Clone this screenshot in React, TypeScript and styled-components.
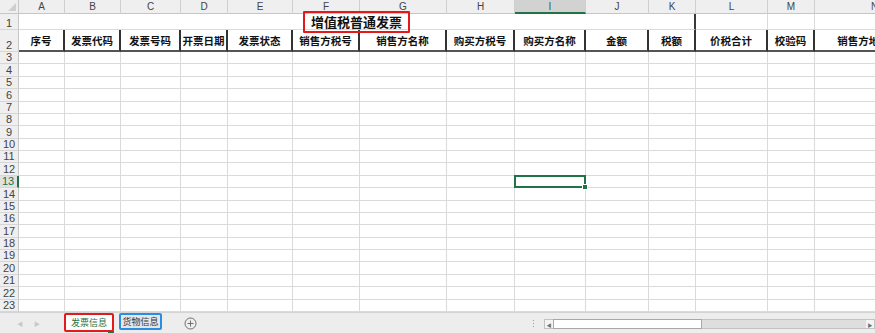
import React from "react";
import styled, { createGlobalStyle, css } from "styled-components";

const GREEN = "#217346";
const GRID = "#dadada";
const FONT = `"Noto Sans CJK SC", "Noto Sans", "Liberation Sans", sans-serif`;

const Global = createGlobalStyle`
  html, body { margin: 0; padding: 0; background: #fff; overflow: hidden; }
  body { font-family: ${FONT}; }
`;

const COLS = [19, 46, 56, 60, 47, 65, 67, 87, 68, 71, 63, 47, 72, 47, 120];
const LETTERS = ["A", "B", "C", "D", "E", "F", "G", "H", "I", "J", "K", "L", "M", "N"];
const HEADERS = [
  "序号", "发票代码", "发票号码", "开票日期", "发票状态", "销售方税号", "销售方名称",
  "购买方税号", "购买方名称", "金额", "税额", "价税合计", "校验码", "销售方地址电话",
];
const SEL_ROW = 13;
const SEL_COL = 8;

const Window = styled.div`
  width: 875px;
  height: 333px;
  display: flex;
  flex-direction: column;
  overflow: hidden;
  background: #fff;
`;

const Sheet = styled.div`
  flex: none;
  height: 312px;
  display: grid;
  grid-template-columns: ${COLS.map((c) => c + "px").join(" ")};
  grid-template-rows: 14px 16px 22px repeat(21, 1fr);
  width: max-content;
`;

const Corner = styled.div`
  position: relative;
  background: #efefef;
  border-right: 1px solid #c6c6c6;
  border-bottom: 1px solid #c6c6c6;
  box-sizing: border-box;
  &::after {
    content: "";
    position: absolute;
    right: 2px;
    bottom: 2px;
    width: 0;
    height: 0;
    border-left: 8px solid transparent;
    border-bottom: 8px solid #cfcfcf;
  }
`;

const ColHead = styled.div<{ $sel?: boolean }>`
  box-sizing: border-box;
  background: ${(p) => (p.$sel ? "#d2d2d2" : "#efefef")};
  border-right: 1px solid #cfcfcf;
  border-bottom: ${(p) => (p.$sel ? `2px solid ${GREEN}` : "1px solid #c6c6c6")};
  color: ${(p) => (p.$sel ? "#2f5f44" : "#444")};
  font-family: "Liberation Sans", sans-serif;
  font-size: 10px;
  line-height: 13px;
  text-align: center;
  overflow: hidden;
  white-space: nowrap;
`;

const RowHead = styled.div<{ $sel?: boolean }>`
  box-sizing: border-box;
  background: ${(p) => (p.$sel ? "#e1e1e1" : "#efefef")};
  border-right: ${(p) => (p.$sel ? `2px solid ${GREEN}` : "1px solid #c6c6c6")};
  border-bottom: 1px solid #d6d6d6;
  color: ${(p) => (p.$sel ? GREEN : "#444")};
  font-family: "Liberation Sans", sans-serif;
  font-size: 11px;
  line-height: 11px;
  display: flex;
  align-items: flex-end;
  justify-content: center;
  padding-bottom: 0;
  padding-right: ${(p) => (p.$sel ? "1px" : "0")};
`;

const Cell = styled.div<{ $thick?: boolean; $sel?: boolean }>`
  box-sizing: border-box;
  position: relative;
  border-right: ${(p) => (p.$thick ? "2px solid #3a3a3a" : `1px solid ${GRID}`)};
  border-bottom: 1px solid ${GRID};
  ${(p) =>
    p.$sel &&
    css`
      z-index: 2;
      &::before {
        content: "";
        position: absolute;
        left: -1px;
        top: -1px;
        right: -1px;
        bottom: -1px;
        border: 2px solid ${GREEN};
      }
      &::after {
        content: "";
        position: absolute;
        right: -3px;
        bottom: -3px;
        width: 4px;
        height: 4px;
        background: ${GREEN};
        border: 1px solid #fff;
      }
    `}
`;

const TitleCell = styled.div`
  grid-column: 2 / 13;
  box-sizing: border-box;
  border-right: 2px solid #3a3a3a;
  border-bottom: 1px solid ${GRID};
  display: flex;
  align-items: center;
  justify-content: center;
  position: relative;
  z-index: 3;
`;

const Title = styled.span`
  position: relative;
  font-size: 13px;
  font-weight: 700;
  line-height: 16px;
  color: #111;
  white-space: nowrap;
  &::after {
    content: "";
    position: absolute;
    left: -8px;
    right: -8px;
    top: -3px;
    bottom: -3px;
    border: 2px solid #e41a1a;
    border-radius: 1px;
  }
`;

const HeadCell = styled.div`
  box-sizing: border-box;
  border-right: 2px solid #333;
  border-bottom: 2px solid #555;
  display: flex;
  align-items: center;
  justify-content: center;
  font-size: 10.5px;
  font-weight: 700;
  color: #111;
  white-space: nowrap;
  overflow: visible;
  padding-top: 1px;
`;

const TabBar = styled.div`
  flex: 1;
  display: flex;
  align-items: stretch;
  background: #ededed;
  border-top: 1px solid #d4d4d4;
  font-size: 9px;
`;

const Nav = styled.div`
  width: 64px;
  display: flex;
  align-items: center;
  gap: 11px;
  padding-left: 17px;
  box-sizing: border-box;
  color: #c8c8c8;
  font-size: 6px;
`;

const Tab = styled.div<{ $active?: boolean; $mark: string }>`
  box-sizing: border-box;
  height: 18px;
  margin-top: 0;
  padding: 0 6px;
  display: flex;
  align-items: center;
  justify-content: center;
  background: ${(p) => (p.$active ? "#fff" : "#e6e6e6")};
  color: ${(p) => (p.$active ? GREEN : "#333")};
  border: 2px solid ${(p) => p.$mark};
  border-radius: 2px;
  font-size: 9px;
  white-space: nowrap;
  position: relative;
  ${(p) =>
    p.$active &&
    css`
      &::after {
        content: "";
        position: absolute;
        right: -2px;
        bottom: -3px;
        width: 6px;
        height: 2px;
        background: ${GREEN};
      }
    `}
`;

const Tabs = styled.div`
  display: flex;
  gap: 5px;
  align-items: flex-start;
  width: 98px;
`;

const AddBtn = styled.div`
  width: 24px;
  margin-left: 16px;
  display: flex;
  align-items: center;
  justify-content: center;
`;

const Spacer = styled.div`
  flex: 1;
`;

const Dots = styled.div`
  width: 3px;
  display: flex;
  flex-direction: column;
  justify-content: center;
  gap: 2px;
  margin-right: 9px;
  span {
    width: 1px;
    height: 1px;
    background: #9a9a9a;
    margin: 0 auto;
  }
`;

const HScroll = styled.div`
  width: 331px;
  height: 10px;
  align-self: center;
  margin-top: 2px;
  display: flex;
  box-sizing: border-box;
  border: 1px solid #c2c2c2;
  background: #dedede;
`;

const ScrollBtn = styled.div`
  width: 8px;
  background: #f4f4f4;
  display: flex;
  align-items: center;
  justify-content: center;
  color: #707070;
  font-size: 5px;
  line-height: 1;
`;

const Thumb = styled.div`
  width: 149px;
  box-sizing: border-box;
  background: #fff;
  border: 1px solid #a8a8a8;
  margin: -1px 0;
`;

const Track = styled.div`
  flex: 1;
`;

export default function App() {
  const rows: React.ReactNode[] = [];

  rows.push(<Corner key="corner" />);
  LETTERS.forEach((l, i) => (
    rows.push(
      <ColHead key={"h" + l} $sel={i === SEL_COL}>
        {l}
      </ColHead>
    )
  ));

  rows.push(<RowHead key="r1">1</RowHead>);
  rows.push(
    <TitleCell key="title">
      <Title>增值税普通发票</Title>
    </TitleCell>
  );
  rows.push(<Cell key="l1" />, <Cell key="m1" />, <Cell key="n1" />);

  rows.push(<RowHead key="r2">2</RowHead>);
  HEADERS.forEach((h) => rows.push(<HeadCell key={"hc" + h}>{h}</HeadCell>));

  for (let r = 3; r <= 23; r++) {
    rows.push(
      <RowHead key={"r" + r} $sel={r === SEL_ROW}>
        {r}
      </RowHead>
    );
    for (let c = 0; c < LETTERS.length; c++) {
      rows.push(<Cell key={`c${r}-${c}`} $sel={r === SEL_ROW && c === SEL_COL} />);
    }
  }

  return (
    <Window>
      <Global />
      <Sheet>{rows}</Sheet>
      <TabBar>
        <Nav>
          <span>◀</span>
          <span>▶</span>
        </Nav>
        <Tabs>
          <Tab $active $mark="#e41a1a" style={{ width: 50, height: 19 }}>
            发票信息
          </Tab>
          <Tab $mark="#2a8ee0" style={{ width: 43, height: 17 }}>
            货物信息
          </Tab>
        </Tabs>
        <AddBtn>
          <svg width="13" height="13" viewBox="0 0 13 13">
            <circle cx="6.5" cy="6.5" r="5.5" fill="none" stroke="#6e6e6e" strokeWidth="1" />
            <path d="M6.5 3.5v6M3.5 6.5h6" stroke="#6e6e6e" strokeWidth="1" />
          </svg>
        </AddBtn>
        <Spacer />
        <Dots>
          <span />
          <span />
          <span />
        </Dots>
        <HScroll>
          <ScrollBtn>◀</ScrollBtn>
          <Thumb />
          <Track />
          <ScrollBtn>▶</ScrollBtn>
        </HScroll>
      </TabBar>
    </Window>
  );
}
